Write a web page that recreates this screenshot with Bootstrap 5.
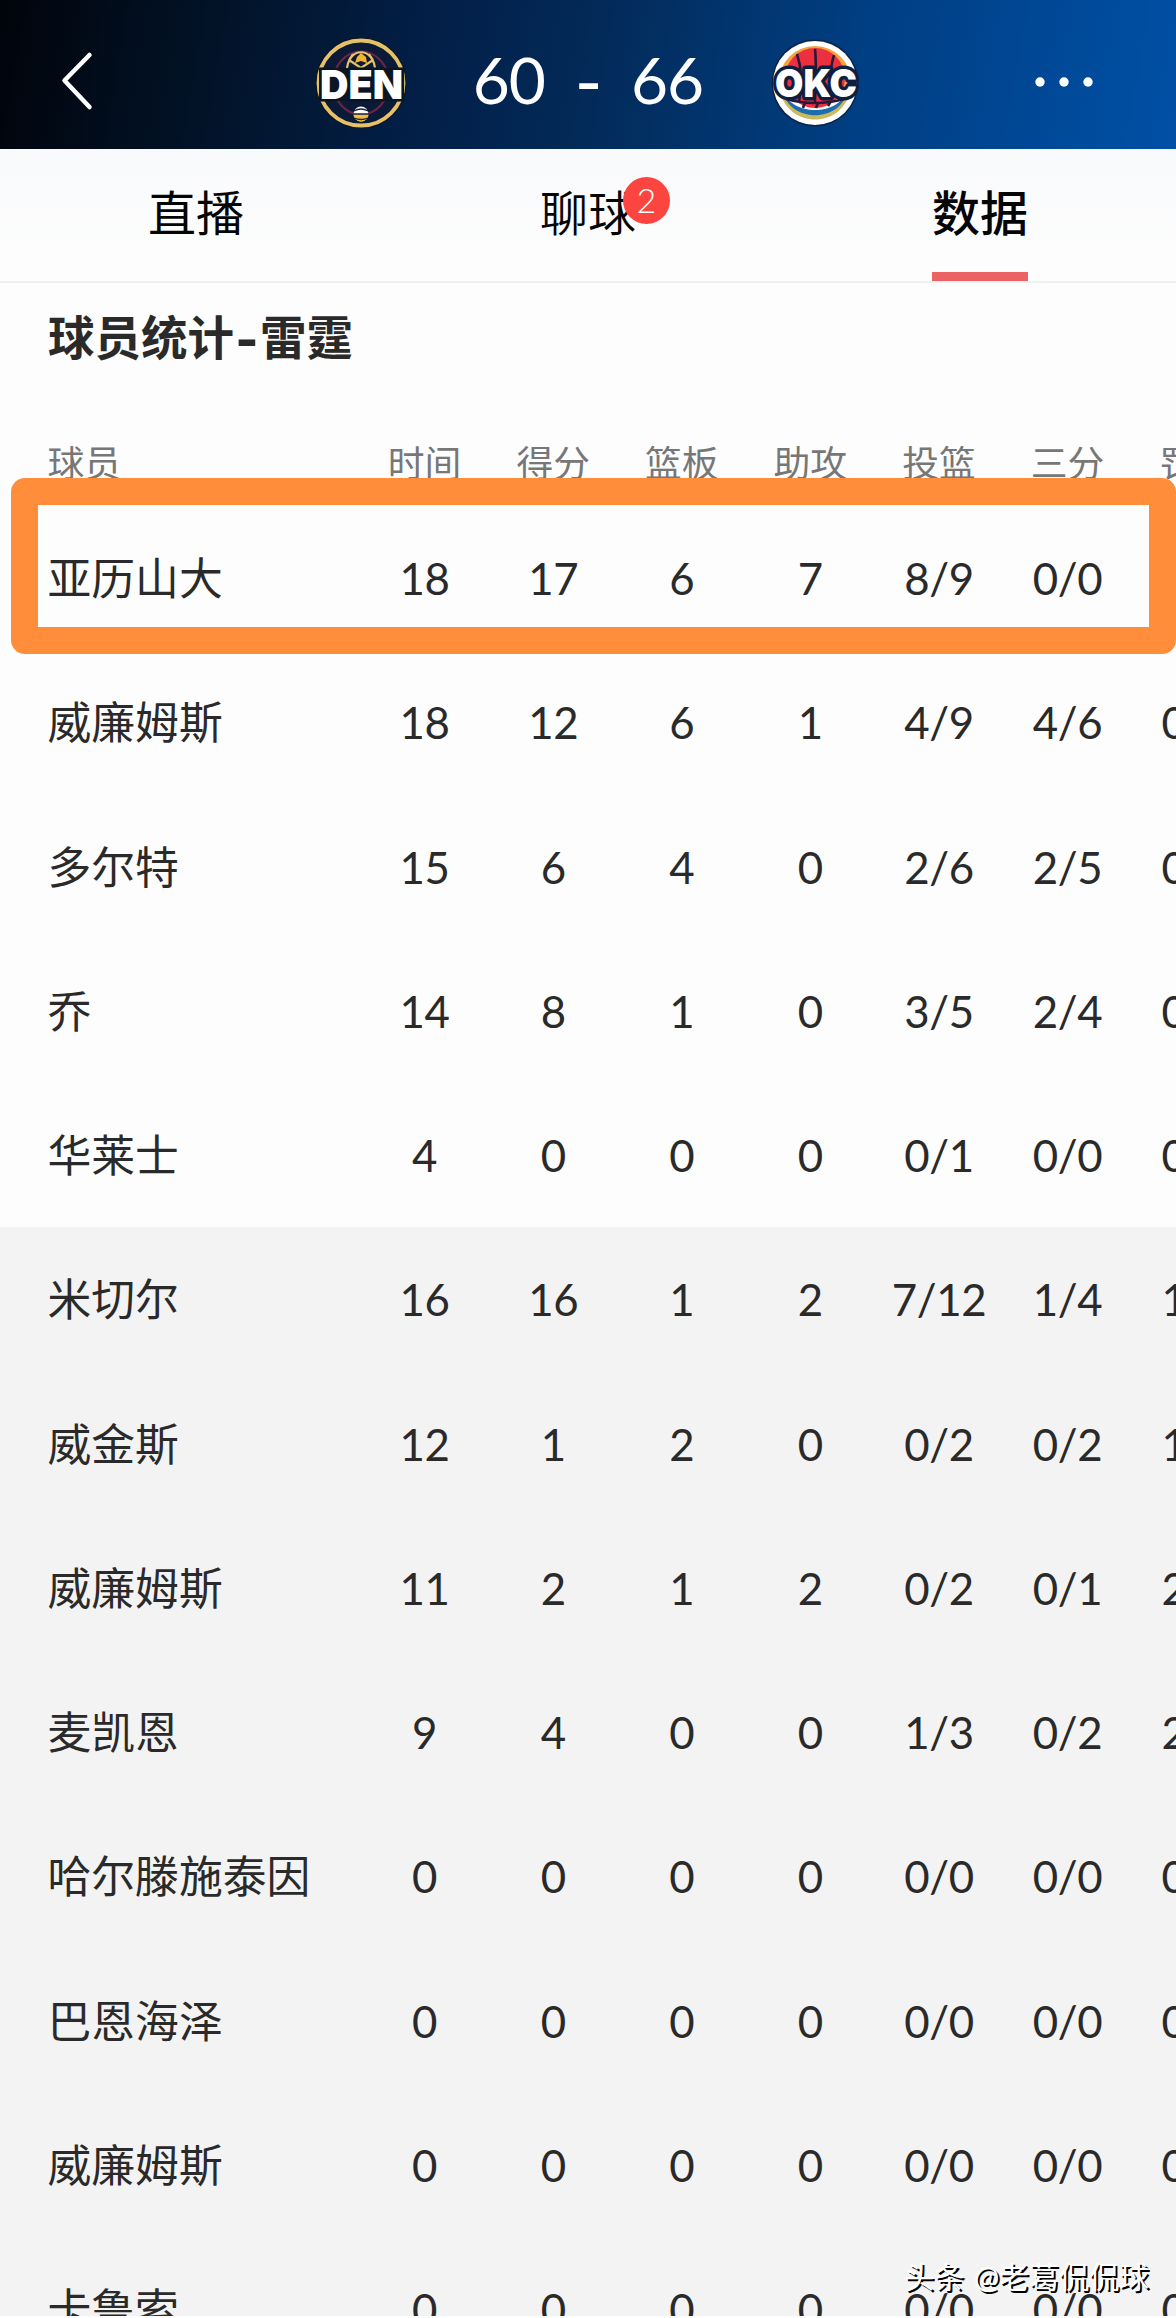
<!DOCTYPE html>
<html lang="zh-CN">

<head>
    <meta charset="UTF-8">
    <meta name="viewport" content="width=device-width, initial-scale=1.0">
    <title>球员统计</title>
    <link href="https://cdn.jsdelivr.net/npm/bootstrap@5.3.3/dist/css/bootstrap.min.css" rel="stylesheet" />
    <style>
        body {
            font-family: "Lato", "Noto Sans CJK SC", sans-serif;
            background-color: #fdfdfd;
            color: #2a2a2a;
        }

        .screen {
            height: 2318px;
        }

        .match-header {
            display: grid;
            grid-template-columns: 316px 90px 364px 90px 1fr;
            height: 149px;
            padding-top: 17px;
            background: linear-gradient(100deg, #01040b 0%, #021226 17%, #02204a 38%, #032a58 50%, #003e82 72%, #0050a6 100%);
        }

        .score {
            font-size: 64px;
            line-height: 1;
            letter-spacing: -1px;
            padding-bottom: 7px;
        }

        .score-dash {
            width: 86px;
            font-size: 76px;
            line-height: 64px;
        }

        .match-tabs {
            height: 134px;
            border-bottom: 2px solid #eef1f2;
            background: linear-gradient(#f9fafc, #fdfdfd);
        }

        .match-tab {
            color: #050505;
            font-size: 48px;
            line-height: 56px;
            padding-top: 36px;
        }

        .tab-thin {
            font-weight: 350;
        }

        .tab-current {
            font-weight: 500;
        }

        .tab-line {
            width: 96px;
            height: 9px;
            background-color: #ec6163;
        }

        .chat-count {
            left: 83px;
            top: -8px;
            width: 47px;
            height: 47px;
            font-size: 34px;
            line-height: 46px;
            background-color: #fd4540;
        }

        .stats-title {
            height: 110px;
            font-size: 46.5px;
            padding-left: 48px;
        }

        .stats-title span {
            width: 26px;
            font-size: 64px;
            line-height: 46px;
        }

        .stat-line {
            height: 144.25px;
            font-size: 43.8px;
            line-height: 60px;
        }

        .stat-line .stat-value {
            letter-spacing: -.4px;
        }

        .stat-labels {
            height: 113px;
            padding-bottom: 15px;
            font-size: 36.8px;
            color: #777;
        }

        .stat-name {
            width: 360.3px;
            padding-left: 47.5px;
        }

        .stat-value {
            width: 128.6px;
        }

        .bench {
            background-color: #f3f3f3;
        }

        .marker-box {
            left: 10.5px;
            right: 0;
            top: -28px;
            height: 176px;
            border: 27px solid #ff8d3a;
            border-radius: 14px;
        }

        .bottom-strip {
            height: 2px;
            background-color: #fdfdfd;
        }

        .watermark {
            right: 27px;
            bottom: 22px;
            font-size: 30px;
            line-height: 40px;
            word-spacing: 2px;
            color: #fff;
            text-shadow: 2px 2px 0 #000;
        }
    </style>
</head>

<body>
    <div class="screen position-relative overflow-hidden d-flex flex-column">
        <header class="match-header align-items-center text-white flex-shrink-0">
            <a class="ms-5 ps-2 d-flex text-white" href="#" aria-label="返回">
                <svg width="42" height="64" viewBox="0 0 42 64" fill="none" stroke="#fff" stroke-width="4.5" stroke-linecap="round" stroke-linejoin="round">
                    <path d="M33.500 4 L8.500 29.500 L33.500 56" />
                </svg>
            </a>
            <svg width="90" height="92" viewBox="0 0 90 92">
                <circle cx="45" cy="46" r="43" fill="#0b1a36" stroke="#10161f" stroke-width="5" />
                <circle cx="45" cy="46" r="42.500" fill="none" stroke="#e5c169" stroke-width="3.800" />
                <ellipse cx="45" cy="46" rx="28" ry="31.500" fill="none" stroke="#6b2448" stroke-width="2" />
                <path d="M31 34 C31 9 59 9 59 34 M33 23 L45 31 L57 23 M37 17 L33 23 M53 17 L57 23" fill="none" stroke="#e5c169" stroke-width="2.200" />
                <path d="M39 26 L41 20 L45 16 L50 20 L51 26 L45 24 Z" fill="#f5b335" />
                <rect x="3" y="31" width="85" height="33" fill="#0b1523" />
                <text x="4" y="62" font-family="Inter, sans-serif" font-weight="900" font-size="40" textLength="83" lengthAdjust="spacingAndGlyphs" fill="#fff" stroke="#0b1523" stroke-width="5" paint-order="stroke">DEN</text>
                <circle cx="45" cy="77" r="7.500" fill="#fff" />
                <path d="M37.500 77 H52.500 A7.500 7.500 0 0 1 37.500 77" fill="#f2bd3c" />
                <path d="M38 74 Q45 70 52 74 M37 77 H53 M38 81 Q45 84 52 81" fill="none" stroke="#16213a" stroke-width="1.300" />
            </svg>
            <div class="score d-flex justify-content-center align-items-center text-center">
                <div>60</div>
                <div class="score-dash">-</div>
                <div>66</div>
            </div>
            <svg width="90" height="92" viewBox="0 0 90 92">
                <circle cx="45" cy="46" r="43.500" fill="#0b2348" />
                <circle cx="45" cy="46" r="42" fill="#fff" />
                <circle cx="45" cy="45" r="36" fill="#f2a33c" />
                <path d="M10 54 C18 92 72 92 80 54 Z" fill="#ccb95c" />
                <path d="M12 52 C18 87 72 87 78 52 Z" fill="#1d6db0" />
                <path d="M12 52 C20 80 70 80 78 52 Z" fill="#fff" />
                <circle cx="45" cy="41" r="30" fill="#ed3040" />
                <path d="M16 62 Q45 70 74 62 M45 12 C47 30 45 50 45 65 M27 17 C33 35 32 50 29 65 M64 18 C58 38 61 50 64 60 M35 65 L33 71 M48 66 L46 71 M61 64 L58 69" fill="none" stroke="#2b1638" stroke-width="2.600" />
                <text x="5" y="60" font-family="Inter, sans-serif" font-weight="900" font-size="39" textLength="82" lengthAdjust="spacingAndGlyphs" fill="#fff" stroke="#0e1f40" stroke-width="7" stroke-linejoin="round" paint-order="stroke">OKC</text>
            </svg>
            <svg class="ms-auto me-5" width="100" height="20" viewBox="0 0 100 20" fill="#fff">
                <circle cx="12" cy="9" r="4.700" />
                <circle cx="36" cy="9" r="4.700" />
                <circle cx="60" cy="9" r="4.700" />
            </svg>
        </header>

        <nav class="match-tabs row g-0 text-center flex-shrink-0">
            <div class="col-4 match-tab">直播</div>
            <div class="col-4 match-tab tab-thin">
                <span class="position-relative d-inline-block">聊球<span class="chat-count position-absolute rounded-circle text-white">2</span></span>
            </div>
            <div class="col-4 match-tab tab-current d-flex flex-column align-items-center justify-content-between">
                数据
                <div class="tab-line"></div>
            </div>
        </nav>

        <h1 class="stats-title fw-bold mb-0 d-flex align-items-center flex-shrink-0">球员统计<span class="text-center">-</span>雷霆</h1>
        <div class="stat-labels d-flex align-items-end flex-shrink-0" id="labels"></div>
        <div class="flex-shrink-0 position-relative">
            <div id="starters"></div>
            <div class="marker-box position-absolute"></div>
        </div>
        <div class="bench flex-fill overflow-hidden" id="bench"></div>
        <div class="bottom-strip flex-shrink-0"></div>
        <div class="watermark position-absolute text-nowrap">头条 @老葛侃侃球</div>
    </div>

    <script>
    const labels = ["球员", "时间", "得分", "篮板", "助攻", "投篮", "三分", "罚球"];
    const starters = [
        ["亚历山大", 18, 17, 6, 7, "8/9", "0/0", "1/1"],
        ["威廉姆斯", 18, 12, 6, 1, "4/9", "4/6", "0/0"],
        ["多尔特", 15, 6, 4, 0, "2/6", "2/5", "0/0"],
        ["乔", 14, 8, 1, 0, "3/5", "2/4", "0/0"],
        ["华莱士", 4, 0, 0, 0, "0/1", "0/0", "0/0"],
    ];
    const bench = [
        ["米切尔", 16, 16, 1, 2, "7/12", "1/4", "1/1"],
        ["威金斯", 12, 1, 2, 0, "0/2", "0/2", "1/2"],
        ["威廉姆斯", 11, 2, 1, 2, "0/2", "0/1", "2/2"],
        ["麦凯恩", 9, 4, 0, 0, "1/3", "0/2", "2/2"],
        ["哈尔滕施泰因", 0, 0, 0, 0, "0/0", "0/0", "0/0"],
        ["巴恩海泽", 0, 0, 0, 0, "0/0", "0/0", "0/0"],
        ["威廉姆斯", 0, 0, 0, 0, "0/0", "0/0", "0/0"],
        ["卡鲁索", 0, 0, 0, 0, "0/0", "0/0", "0/0"],
    ];

    const cells = (vals) => vals.map((val, i) =>
        `<div class="${i ? 'stat-value text-center' : 'stat-name'} flex-shrink-0 text-nowrap">${val}</div>`
    ).join("");

    const viewRows = (id, rows) => {
        let out = "";
        rows.forEach(val => {
            out += `<div class="stat-line d-flex align-items-center">${cells(val)}</div>`;
        });
        document.getElementById(id).innerHTML = out;
    };

    document.getElementById("labels").innerHTML = cells(labels);
    viewRows("starters", starters);
    viewRows("bench", bench);
    </script>
    <script src="https://cdn.jsdelivr.net/npm/bootstrap@5.3.3/dist/js/bootstrap.bundle.min.js"></script>
</body>

</html>
